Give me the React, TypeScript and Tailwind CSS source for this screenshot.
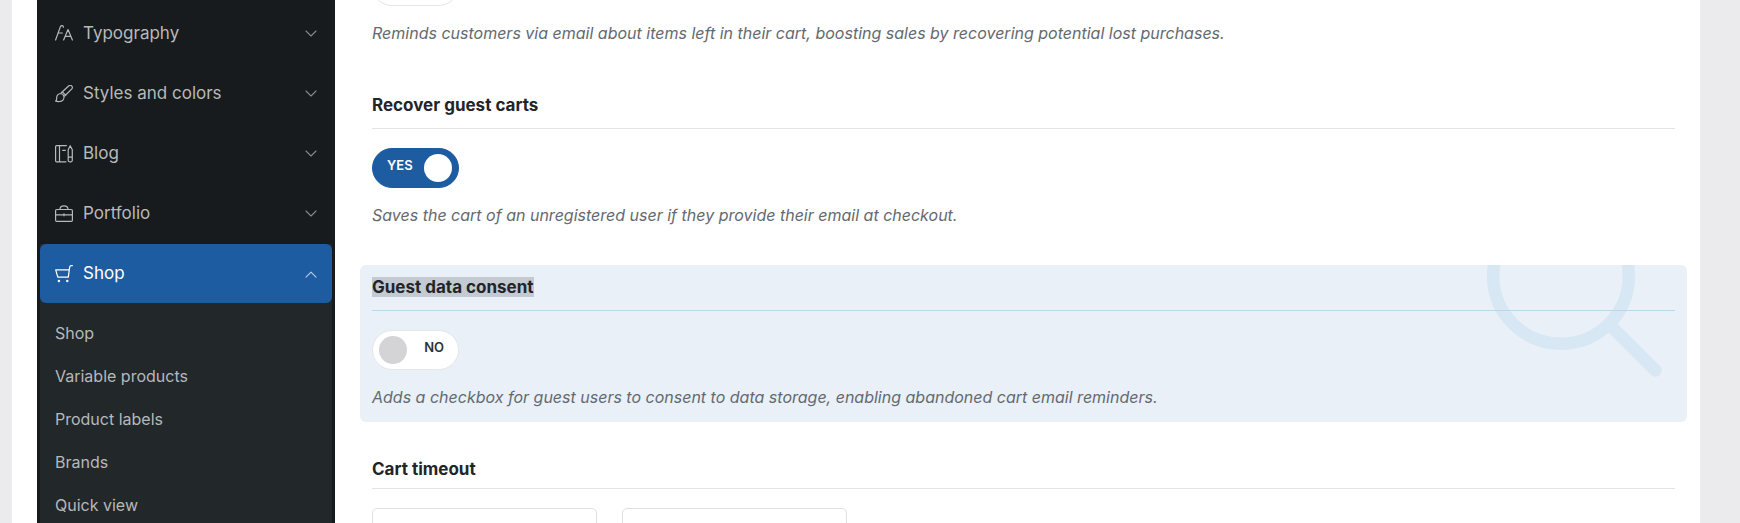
import { useState, type ReactNode } from 'react'
import clsx from 'clsx'

function Icon({ children }: { children: ReactNode }) {
  return (
    <svg
      viewBox="0 0 18 18"
      className="w-[18px] h-[18px] shrink-0"
      fill="none"
      stroke="currentColor"
      strokeWidth="1.2"
      strokeLinecap="round"
      strokeLinejoin="round"
      aria-hidden="true"
    >
      {children}
    </svg>
  )
}

const TypographyIcon = () => (
  <Icon>
    <path d="M0.6 15 5.4 1.6Q6 .4 7.4.6Q8.400.8 8.400 2.200M3.400 8h4" />
    <path d="M8.600 15 13 4.600 17.400 15M10.200 11.300h5.600" />
  </Icon>
)

const BrushIcon = () => (
  <Icon>
    <path d="M6.300 7.800 13.600 1a2.100 2.100 0 0 1 3.200 2.900L9.700 11" />
    <path d="M0.700 16.100c1-.7.900-1.700 1-3a4.200 4.200 0 0 1 4-4.600 3.800 3.800 0 0 1 3.300 3.200c.2 2.600-1.700 4.600-4.300 4.800-1.300.1-2.800 0-4-.4Z" />
    <path d="M7.400 6.900 10.600 10.100" />
  </Icon>
)

const BlogIcon = () => (
  <Icon>
    <path d="M11 16.800H1.600a1 1 0 0 1-1-1V1.600a1 1 0 0 1 1-1H11.400M4.500.6V16.800M7.700 5.400h2.600" />
    <path d="M13.200 4.800 15.200.7 17.300 4.800V15.300a1.500 1.500 0 0 1-1.500 1.500h-1.100a1.500 1.500 0 0 1-1.500-1.500ZM13.200 12.200h4.100" />
  </Icon>
)

const BriefcaseIcon = () => (
  <Icon>
    <rect x="0.600" y="4.500" width="16.800" height="11.900" rx="1.200" />
    <path d="M5 4.300C5 1.900 6.400.9 9 .9s4 1 4 3.400M.6 9.800h16.800M9 8.800v2" />
  </Icon>
)

const CartIcon = () => (
  <Icon>
    <path d="M14 4.800H.7L2.800 12.200H13.300L14.700 1.800Q14.900.6 16.200.6h1.200" />
    <circle cx="3.900" cy="16" r="1.200" fill="currentColor" stroke="none" />
    <circle cx="12.300" cy="16" r="1.200" fill="currentColor" stroke="none" />
  </Icon>
)

function Chevron({ up }: { up: boolean }) {
  return (
    <svg
      viewBox="0 0 12 12"
      className="w-3 h-3 shrink-0 opacity-70"
      fill="none"
      stroke="currentColor"
      strokeWidth="1.100"
      strokeLinecap="round"
      strokeLinejoin="round"
      aria-hidden="true"
    >
      <path d={up ? 'M1 9.200 6 4.200 11 9.200' : 'M1 3 6 8 11 3'} />
    </svg>
  )
}

const navItems = [
  { label: 'Typography', icon: TypographyIcon },
  { label: 'Styles and colors', icon: BrushIcon },
  { label: 'Blog', icon: BlogIcon },
  { label: 'Portfolio', icon: BriefcaseIcon },
  {
    label: 'Shop',
    icon: CartIcon,
    children: ['Shop', 'Variable products', 'Product labels', 'Brands', 'Quick view'],
  },
]

function Sidebar() {
  return (
    <aside className="w-[298px] shrink-0 bg-[#171b1d] px-[3px] pt-1">
      <nav className="flex flex-col gap-px">
        {navItems.map(({ label, icon: ItemIcon, children }) => (
          <div key={label} className={clsx(children && 'bg-[#22272a]')}>
            <button
              type="button"
              aria-expanded={!!children}
              className={clsx(
                'flex w-full h-[59px] items-center gap-2.5 px-[15px] text-left text-[17px]',
                children ? 'rounded-md bg-[#1e5ca1] text-white' : 'text-[#b8b9ba]'
              )}
            >
              <ItemIcon />
              <span className="flex-1">{label}</span>
              <Chevron up={!!children} />
            </button>
            {children && (
              <ul className="pt-[9px]">
                {children.map((child) => (
                  <li key={child}>
                    <a href="#" className="block px-[15px] text-base leading-[43px] text-[#b6b9bb]">
                      {child}
                    </a>
                  </li>
                ))}
              </ul>
            )}
          </div>
        ))}
      </nav>
    </aside>
  )
}

type ToggleProps = {
  label: string
  defaultOn?: boolean
  hideCaption?: boolean
}

function Toggle({ label, defaultOn = false, hideCaption = false }: ToggleProps) {
  const [on, setOn] = useState(defaultOn)

  return (
    <label
      className={clsx(
        'relative flex w-[87px] h-10 cursor-pointer items-center justify-between rounded-full border px-1.5',
        on ? 'border-[#1e5ca1] bg-[#1e5ca1] text-white' : 'flex-row-reverse border-[#e6e6e8] bg-white text-[#2c3338]'
      )}
    >
      <input
        type="checkbox"
        role="switch"
        aria-label={label}
        className="sr-only"
        checked={on}
        onChange={() => setOn(!on)}
      />
      <span className="px-2 pb-1 text-[13px] font-semibold">{!hideCaption && (on ? 'YES' : 'NO')}</span>
      <span className={clsx('w-7 h-7 rounded-full', on ? 'bg-white' : 'bg-[#d4d4d6]')} />
    </label>
  )
}

type OptionProps = {
  title: string
  description: string
  on?: boolean
  highlighted?: boolean
}

function Option({ title, description, on, highlighted }: OptionProps) {
  return (
    <section
      className={clsx('relative overflow-hidden rounded-md px-3 pt-3 pb-[13px]', highlighted && 'bg-[#e9f0f8]')}
    >
      {highlighted && (
        <svg
          viewBox="0 0 175 175"
          className="absolute right-[25px] top-[-63px] w-[175px] h-[175px] text-[#d7e7f3]"
          fill="none"
          stroke="currentColor"
          strokeWidth="12.500"
          strokeLinecap="round"
          aria-hidden="true"
        >
          <circle cx="74" cy="74" r="67.800" />
          <path d="M123 123 168.500 168.500" />
        </svg>
      )}
      <div className="relative">
        <h4
          className={clsx(
            'border-b pb-[13px] text-[17px] leading-5 font-bold text-[#222527]',
            highlighted ? 'border-[#b9d9ea]' : 'border-[#e4e4e6]'
          )}
        >
          <span className={clsx(highlighted && 'inline-block bg-[#c4cad1]')}>{title}</span>
        </h4>
        <div className="mt-[19px]">
          <Toggle label={title} defaultOn={on} />
        </div>
        <p className="mt-[15px] text-base italic text-[#646970]">{description}</p>
      </div>
    </section>
  )
}

export default function App() {
  return (
    <div className="h-screen overflow-hidden bg-[#ebebed] pl-3 pr-10 font-['Inter','Liberation_Sans',sans-serif]">
      <div className="flex h-full bg-white pl-[25px]">
        <Sidebar />

        <main className="flex-1 min-w-0 overflow-hidden pl-[25px] pr-[13px]">
          {/* Tail of the option that is scrolled under the top edge */}
          <div className="-mt-[34px] flex flex-col gap-[25px]">
            <section className="px-3 pb-[13px]">
              <Toggle label="Abandoned cart" hideCaption />
              <p className="mt-[15px] text-base italic text-[#646970]">
                Reminds customers via email about items left in their cart, boosting sales by recovering potential lost
                purchases.
              </p>
            </section>
            <Option
              title="Recover guest carts"
              description="Saves the cart of an unregistered user if they provide their email at checkout."
              on
            />
            <Option
              title="Guest data consent"
              description="Adds a checkbox for guest users to consent to data storage, enabling abandoned cart email reminders."
              highlighted
            />

            <section className="px-3 pt-3">
              <h4 className="border-b border-[#e4e4e6] pb-[9px] text-[17px] leading-5 font-bold text-[#222527]">
                Cart timeout
              </h4>
              <div className="mt-[19px] flex gap-[25px]">
                <input
                  type="number"
                  aria-label="Cart timeout"
                  className="w-[225px] h-[42px] rounded-[5px] border border-[#e0e0e2] px-3"
                />
                <select
                  aria-label="Cart timeout unit"
                  className="w-[225px] h-[42px] appearance-none rounded-[5px] border border-[#e0e0e2] bg-white px-3"
                />
              </div>
            </section>
          </div>
        </main>
      </div>
    </div>
  )
}
